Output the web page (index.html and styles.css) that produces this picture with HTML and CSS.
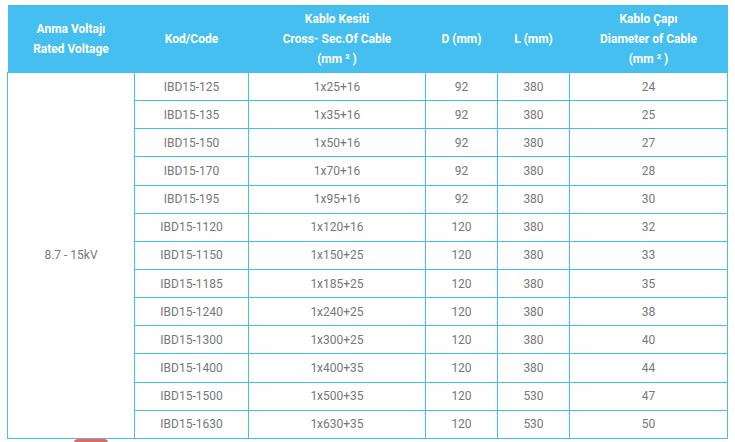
FILE: index.html
```html
<!DOCTYPE html>
<html>
<head>
<meta charset="utf-8">
<link rel="stylesheet" href="styles.css">
</head>
<body>
<div class="page">
  <table class="spec">
    <colgroup>
      <col class="c1"><col class="c2"><col class="c3"><col class="c4"><col class="c5"><col class="c6">
    </colgroup>
    <thead>
      <tr>
        <th>Anma Voltajı<br>Rated Voltage</th>
        <th>Kod/Code</th>
        <th>Kablo Kesiti<br>Cross- Sec.Of Cable<br>(mm ² )</th>
        <th>D (mm)</th>
        <th>L (mm)</th>
        <th>Kablo Çapı<br>Diameter of Cable<br>(mm ² )</th>
      </tr>
    </thead>
    <tbody>
      <tr><td rowspan="13">8.7 - 15kV</td><td>IBD15-125</td><td>1x25+16</td><td>92</td><td>380</td><td>24</td></tr>
      <tr><td>IBD15-135</td><td>1x35+16</td><td>92</td><td>380</td><td>25</td></tr>
      <tr><td>IBD15-150</td><td>1x50+16</td><td>92</td><td>380</td><td>27</td></tr>
      <tr><td>IBD15-170</td><td>1x70+16</td><td>92</td><td>380</td><td>28</td></tr>
      <tr><td>IBD15-195</td><td>1x95+16</td><td>92</td><td>380</td><td>30</td></tr>
      <tr><td>IBD15-1120</td><td>1x120+16</td><td>120</td><td>380</td><td>32</td></tr>
      <tr><td>IBD15-1150</td><td>1x150+25</td><td>120</td><td>380</td><td>33</td></tr>
      <tr><td>IBD15-1185</td><td>1x185+25</td><td>120</td><td>380</td><td>35</td></tr>
      <tr><td>IBD15-1240</td><td>1x240+25</td><td>120</td><td>380</td><td>38</td></tr>
      <tr><td>IBD15-1300</td><td>1x300+25</td><td>120</td><td>380</td><td>40</td></tr>
      <tr><td>IBD15-1400</td><td>1x400+35</td><td>120</td><td>380</td><td>44</td></tr>
      <tr><td>IBD15-1500</td><td>1x500+35</td><td>120</td><td>530</td><td>47</td></tr>
      <tr><td>IBD15-1630</td><td>1x630+35</td><td>120</td><td>530</td><td>50</td></tr>
    </tbody>
  </table>
  <div class="tab"></div>
</div>
</body>
</html>
```
FILE: styles.css
```css
html, body {
  margin: 0;
  padding: 0;
  background: #ffffff;
}
.page {
  padding: 5px 0 0 7px;
  font-family: Roboto, "Liberation Sans", Arial, sans-serif;
}
.spec {
  border-collapse: collapse;
  table-layout: fixed;
  width: 720px;
}
.c1 { width: 127px; }
.c2 { width: 114px; }
.c3 { width: 177px; }
.c4 { width: 72px; }
.c5 { width: 72px; }
.c6 { width: 158px; }
.spec th {
  background: #45bef0;
  color: #ffffff;
  font-weight: 700;
  font-size: 12px;
  line-height: 20px;
  height: 67px;
  padding: 0;
  text-align: center;
  vertical-align: middle;
  border: 0;
}
.spec td {
  border: 1px solid #45bef0;
  color: #777777;
  font-size: 12px;
  height: 27.15px;
  padding: 0;
  text-align: center;
  vertical-align: middle;
}
.tab {
  margin-left: 67px;
  width: 34px;
  height: 6px;
  background: #f0625a;
  border-radius: 4px 4px 0 0;
}
```
